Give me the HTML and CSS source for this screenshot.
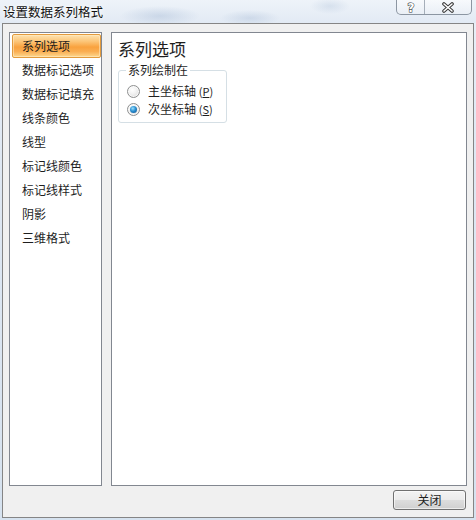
FILE: index.html
```html
<!DOCTYPE html>
<html lang="zh-CN">
<head>
<meta charset="utf-8">
<title>设置数据系列格式</title>
<link rel="stylesheet" href="styles.css">
</head>
<body>
<div class="window">
  <div class="titlebar">
    <span class="title">设置数据系列格式</span>
    <div class="caption-btns">
      <div class="cap-btn help">
        <svg width="12" height="12" viewBox="0 0 12 12"><text x="6" y="10.5" text-anchor="middle" class="qmark">?</text></svg>
      </div>
      <div class="cap-btn close">
        <svg width="14" height="11" viewBox="0 0 14 11">
          <path d="M3 2 L11 9 M11 2 L3 9" stroke="#3a3a3a" stroke-width="3.6" stroke-linecap="round"/>
          <path d="M3 2 L11 9 M11 2 L3 9" stroke="#ffffff" stroke-width="1.6" stroke-linecap="round"/>
        </svg>
      </div>
    </div>
  </div>
  <div class="dialog">
    <div class="main">
      <ul class="nav">
        <li class="nav-item selected">系列选项</li>
        <li class="nav-item">数据标记选项</li>
        <li class="nav-item">数据标记填充</li>
        <li class="nav-item">线条颜色</li>
        <li class="nav-item">线型</li>
        <li class="nav-item">标记线颜色</li>
        <li class="nav-item">标记线样式</li>
        <li class="nav-item">阴影</li>
        <li class="nav-item">三维格式</li>
      </ul>
      <div class="panel">
        <div class="panel-title">系列选项</div>
        <fieldset class="group">
          <legend class="group-legend">系列绘制在</legend>
          <label class="radio-row"><span class="radio"></span><span class="radio-label">主坐标轴 <span class="acc">(<u>P</u>)</span></span></label>
          <label class="radio-row"><span class="radio checked"></span><span class="radio-label">次坐标轴 <span class="acc">(<u>S</u>)</span></span></label>
        </fieldset>
      </div>
    </div>
    <div class="footer">
      <button class="btn">关闭</button>
    </div>
  </div>
</div>
</body>
</html>
```
FILE: styles.css
```css
* { box-sizing: border-box; }
html, body {
  margin: 0;
  padding: 0;
}
body {
  width: 476px;
  height: 520px;
  overflow: hidden;
  font-family: "Noto Sans CJK SC", "Noto Sans", sans-serif;
  font-size: 12px;
  color: #1e1e1e;
}
.window {
  width: 476px;
  height: 520px;
  background: linear-gradient(180deg, #e9f0f8 0%, #dfe8f3 30%, #d6e2ef 100%);
  display: flex;
  flex-direction: column;
}
.titlebar {
  height: 23px;
  display: flex;
  align-items: flex-start;
  background:
    radial-gradient(ellipse 40px 10px at 160px 16px, rgba(120,150,190,0.25), transparent),
    radial-gradient(ellipse 30px 8px at 250px 18px, rgba(120,150,190,0.22), transparent),
    radial-gradient(ellipse 20px 8px at 330px 6px, rgba(120,150,190,0.18), transparent),
    linear-gradient(180deg, #eef3f9, #e2eaf4);
}
.title {
  padding-left: 3px;
  padding-top: 4px;
  font-size: 12.5px;
  line-height: 16px;
  color: #111;
  text-shadow: 0 0 6px #fff, 0 0 3px #fff;
}
.caption-btns {
  margin-left: auto;
  margin-right: 4px;
  display: flex;
  height: 15px;
  border: 1px solid #8c96a2;
  border-top: none;
  border-radius: 0 0 5px 5px;
  overflow: hidden;
  background: linear-gradient(180deg, rgba(255,255,255,0.55), rgba(235,240,246,0.8));
}
.cap-btn {
  display: flex;
  align-items: center;
  justify-content: center;
}
.help {
  width: 28px;
  border-right: 1px solid #a5aeb9;
}
.close {
  width: 46px;
}
.qmark {
  font-family: "DejaVu Sans", sans-serif;
  font-weight: bold;
  font-size: 12px;
  fill: #ffffff;
  stroke: #3a3a3a;
  stroke-width: 1.1px;
  paint-order: stroke;
}
.dialog {
  margin-left: 2px;
  width: 472px;
  height: 495px;
  border: 1px solid #858585;
  background: #f0f0f0;
  padding: 8px 6px 0 6px;
  display: flex;
  flex-direction: column;
}
.main {
  display: flex;
  gap: 9px;
  height: 454px;
}
.nav {
  list-style: none;
  margin: 0;
  width: 93px;
  height: 454px;
  border: 1px solid #828790;
  background: #fff;
  padding: 1px 0 0 2px;
}
.nav-item {
  height: 24px;
  line-height: 24px;
  padding-left: 10px;
  white-space: nowrap;
  color: #1e1e1e;
}
.nav-item.selected {
  border: 1px solid #e29a3c;
  border-radius: 2px;
  padding-left: 9px;
  line-height: 22px;
  background: linear-gradient(180deg, #fde3b0 0%, #fcc476 30%, #f9a23e 55%, #faae52 75%, #fdd88f 100%);
  box-shadow: inset 0 0 0 1px rgba(255,236,200,0.55);
}
.panel {
  width: 356px;
  height: 454px;
  border: 1px solid #828790;
  background: #fff;
  padding: 4px 6px;
}
.panel-title {
  font-size: 17px;
  line-height: 24px;
  color: #1e1e1e;
}
.group {
  margin: 1px 0 0 0;
  width: 109px;
  border: 1px solid #d5dfe5;
  border-radius: 3px;
  padding: 4px 6px 4px 8px;
}
.group-legend {
  padding: 0 2px;
  margin-left: -1px;
  font-size: 12px;
  line-height: 16px;
}
.radio-row {
  display: flex;
  align-items: center;
  height: 18px;
  gap: 8px;
}
.radio {
  width: 13px;
  height: 13px;
  border-radius: 50%;
  border: 1px solid #8e8f8f;
  background: radial-gradient(circle at 40% 35%, #ffffff 0%, #f2f2f2 40%, #d4d4d4 100%);
  box-shadow: inset 0 0 0 1px rgba(255,255,255,0.7);
  position: relative;
  flex: none;
}
.radio.checked::after {
  content: "";
  position: absolute;
  left: 2px;
  top: 2px;
  width: 7px;
  height: 7px;
  border-radius: 50%;
  background: radial-gradient(circle at 40% 35%, #9be0ff 0%, #2a8fd0 45%, #0d4d8c 100%);
}
.radio-label {
  white-space: nowrap;
  line-height: 18px;
}
.acc {
  font-size: 11px;
}
.footer {
  display: flex;
  justify-content: flex-end;
  padding-top: 4px;
  padding-right: 1px;
}
.btn {
  width: 73px;
  height: 20px;
  border: 1px solid #707070;
  border-radius: 3px;
  background: linear-gradient(180deg, #f3f3f3 0%, #ebebeb 48%, #dddddd 52%, #cfcfcf 100%);
  box-shadow: inset 0 0 0 1px rgba(255,255,255,0.6);
  font-family: "Noto Sans CJK SC", "Noto Sans", sans-serif;
  font-size: 12px;
  line-height: 16px;
  color: #1e1e1e;
  padding: 0;
}
```
